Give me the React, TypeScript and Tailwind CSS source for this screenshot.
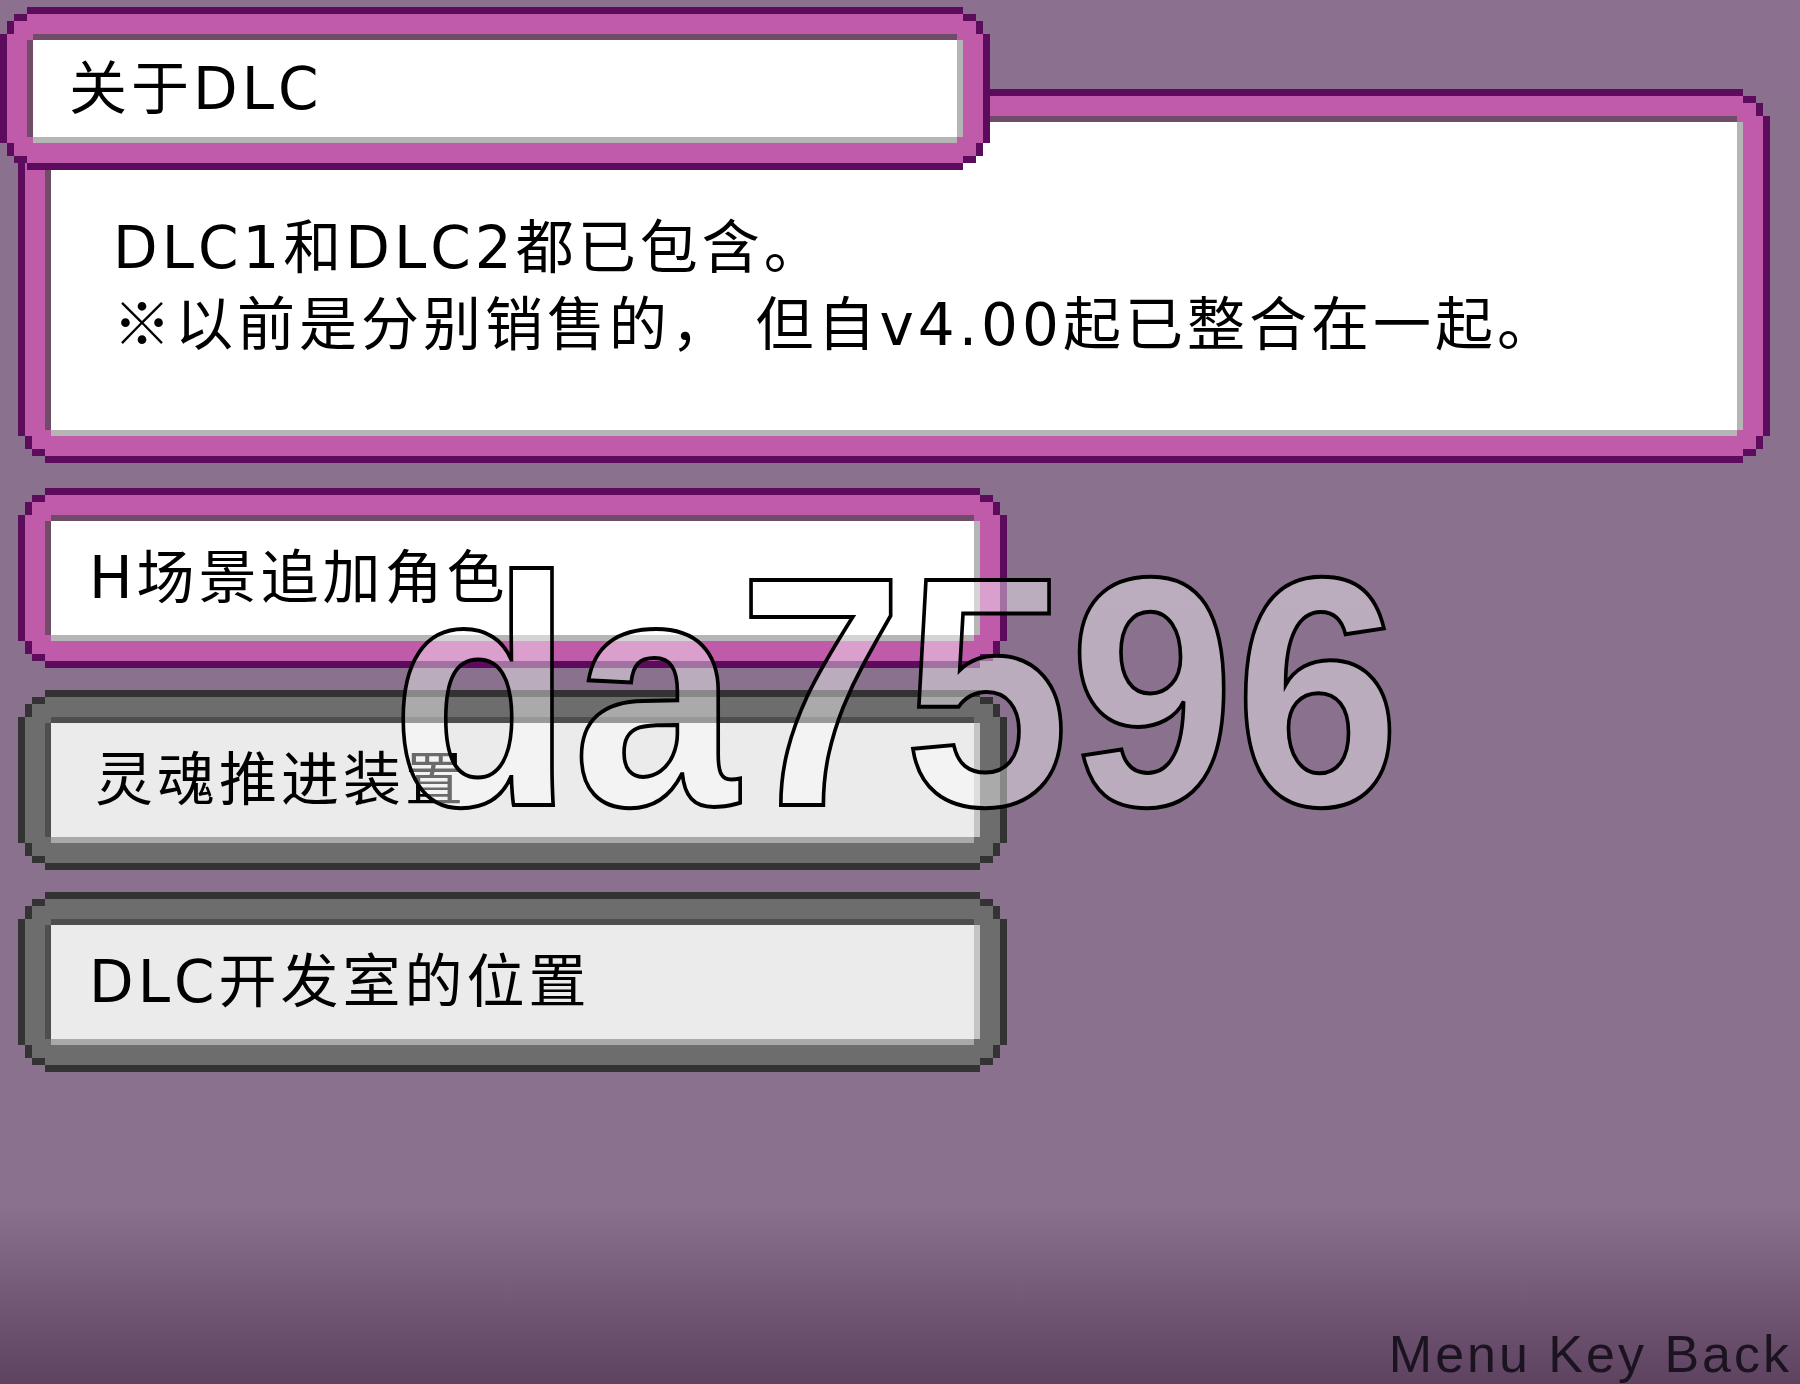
import clsx from "clsx";
import type { ReactNode } from "react";

// stepped "pixel" corners for the three layers of a frame
const EDGE_CLIP =
  "[clip-path:polygon(27px_0,calc(100%_-_27px)_0,calc(100%_-_27px)_7px,calc(100%_-_14px)_7px,calc(100%_-_14px)_14px,calc(100%_-_7px)_14px,calc(100%_-_7px)_27px,100%_27px,100%_calc(100%_-_27px),calc(100%_-_7px)_calc(100%_-_27px),calc(100%_-_7px)_calc(100%_-_14px),calc(100%_-_14px)_calc(100%_-_14px),calc(100%_-_14px)_calc(100%_-_7px),calc(100%_-_27px)_calc(100%_-_7px),calc(100%_-_27px)_100%,27px_100%,27px_calc(100%_-_7px),14px_calc(100%_-_7px),14px_calc(100%_-_14px),7px_calc(100%_-_14px),7px_calc(100%_-_27px),0_calc(100%_-_27px),0_27px,7px_27px,7px_14px,14px_14px,14px_7px,27px_7px)]";
const RING_CLIP =
  "[clip-path:polygon(20px_0,calc(100%_-_20px)_0,calc(100%_-_20px)_7px,calc(100%_-_7px)_7px,calc(100%_-_7px)_20px,100%_20px,100%_calc(100%_-_20px),calc(100%_-_7px)_calc(100%_-_20px),calc(100%_-_7px)_calc(100%_-_7px),calc(100%_-_20px)_calc(100%_-_7px),calc(100%_-_20px)_100%,20px_100%,20px_calc(100%_-_7px),7px_calc(100%_-_7px),7px_calc(100%_-_20px),0_calc(100%_-_20px),0_20px,7px_20px,7px_7px,20px_7px)]";
const PANEL_CLIP =
  "[clip-path:polygon(6px_0,calc(100%_-_6px)_0,calc(100%_-_6px)_6px,100%_6px,100%_calc(100%_-_6px),calc(100%_-_6px)_calc(100%_-_6px),calc(100%_-_6px)_100%,6px_100%,6px_calc(100%_-_6px),0_calc(100%_-_6px),0_6px,6px_6px)]";

const tones = {
  pink: {
    edge: "bg-[#5d0c5d]",
    ring: "bg-[#bf5ba8]",
    panel:
      "bg-white border-t-[#6f4c67] border-l-[#6f4c67] border-r-[#b5b5b5] border-b-[#b5b5b5]",
  },
  gray: {
    edge: "bg-[#333333]",
    ring: "bg-[#6d6d6d]",
    panel:
      "bg-[#ebebeb] border-t-[#4e4e4e] border-l-[#4e4e4e] border-r-[#c4c4c4] border-b-[#a9a9a9]",
  },
};

const font = "font-['DejaVu_Sans','Noto_Sans_CJK_SC',sans-serif]";

function Frame({
  tone,
  className,
  children,
}: {
  tone: keyof typeof tones;
  className?: string;
  children: ReactNode;
}) {
  const t = tones[tone];
  return (
    <div className={clsx("p-[7px]", t.edge, EDGE_CLIP, className)}>
      <div className={clsx("h-full p-[20px]", t.ring, RING_CLIP)}>
        <div className={clsx("h-full border-[6px]", t.panel, PANEL_CLIP)}>
          {children}
        </div>
      </div>
    </div>
  );
}

function MenuItem({
  tone,
  label,
  indent = "pl-[38px]",
}: {
  tone: keyof typeof tones;
  label: string;
  indent?: string;
}) {
  return (
    <Frame tone={tone} className="ml-[18px] h-[180px] w-[989px]">
      <div
        className={clsx(
          "flex h-full items-center text-[58px] leading-none tracking-[4px] text-black",
          indent,
          font
        )}
      >
        {label}
      </div>
    </Frame>
  );
}

export default function App() {
  return (
    <div className="relative flex h-[1384px] w-full flex-col overflow-hidden bg-[linear-gradient(to_bottom,#8b718f_0%,#8a718e_87%,#5e4361_100%)] pt-[7px]">
      <Frame tone="pink" className="relative z-10 mb-[-81px] h-[163px] w-[990px]">
        <div
          className={clsx(
            "flex h-full items-center pl-[36px] text-[58px] leading-none tracking-[4px] text-black",
            font
          )}
        >
          关于DLC
        </div>
      </Frame>

      <Frame tone="pink" className="ml-[18px] h-[374px] w-[1752px]">
        <div
          className={clsx(
            "pl-[62px] pt-[90px] text-[58px] leading-[72px] tracking-[4px] text-black",
            font
          )}
        >
          <p>DLC1和DLC2都已包含。</p>
          <p>
            <span className="font-['Noto_Sans_CJK_SC',sans-serif]">※</span>
            以前是分别销售的， 但自v4.00起已整合在一起。
          </p>
        </div>
      </Frame>

      <div className="mt-[25px] flex flex-col gap-[22px]">
        <MenuItem tone="pink" label="H场景追加角色" />
        <MenuItem tone="gray" label="灵魂推进装置" indent="pl-[44px]" />
        <MenuItem tone="gray" label="DLC开发室的位置" />
      </div>

      <div className="mt-auto self-end pb-[4px] pr-[8px] font-['Liberation_Sans',sans-serif] text-[52px] leading-none tracking-[3px] text-[#1c1320]">
        Menu Key Back
      </div>

      {/* watermark stamped across the menu */}
      <div className="pointer-events-none absolute left-[391px] top-[528px] z-20 origin-left scale-x-[0.91] font-['Liberation_Sans',sans-serif] text-[327px] font-bold leading-none text-[rgba(255,255,255,0.42)] [-webkit-text-stroke:4px_#000]">
        da7596
      </div>
    </div>
  );
}
